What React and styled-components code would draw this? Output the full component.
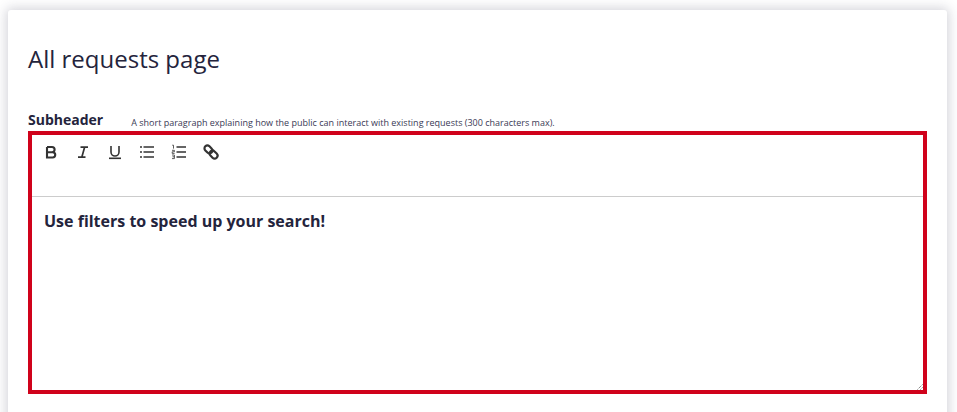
import React from "react";
import styled, { createGlobalStyle } from "styled-components";

const Global = createGlobalStyle`
  html, body { margin: 0; padding: 0; background: #fff; height: 412px; overflow: hidden; }
  body { font-family: "Open Sans", "Liberation Sans", sans-serif; color: #2a2a40; }
`;
const Page = styled.div`
  height: 412px;
  overflow: hidden;
  padding: 10px 10px 0 8px;
  box-sizing: border-box;
`;
const Card = styled.section`
  background: #fff;
  border-radius: 3px;
  box-shadow: 0 0 12px 2px rgba(40, 40, 70, 0.2);
  padding: 29px 20px 40px;
  height: 460px;
  box-sizing: border-box;
`;
const Title = styled.h1`
  margin: 0;
  font-size: 24px;
  line-height: 40px;
  font-weight: 400;
  color: #24243c;
`;
const LabelRow = styled.div`
  display: flex;
  align-items: flex-end;
  margin-top: 30px;
  height: 22px;
`;
const Label = styled.label`
  font-size: 14px;
  font-weight: 700;
  line-height: 22px;
  color: #24243c;
`;
const Hint = styled.span`
  font-size: 9px;
  line-height: 17px;
  margin-left: 28px;
  color: #3a3a55;
`;
const Editor = styled.div`
  border: 4px solid #d0021b;
  height: 263px;
  box-sizing: border-box;
  display: flex;
  flex-direction: column;
  position: relative;
`;
const Toolbar = styled.div`
  height: 62px;
  flex: none;
  border-bottom: 1px solid #ccc;
  display: flex;
  align-items: flex-start;
  padding: 5px 0 0 7px;
  gap: 8px;
  box-sizing: border-box;
`;
const ToolButton = styled.button`
  width: 24px;
  height: 24px;
  padding: 0;
  border: 0;
  background: none;
  display: flex;
  align-items: center;
  justify-content: center;
  color: #333;
`;
const Body = styled.div`
  padding: 12px;
  font-size: 16px;
  font-weight: 700;
  line-height: 24px;
  color: #24243c;
`;
const Grip = styled.svg`
  position: absolute;
  right: 0;
  bottom: 0;
`;
const Icon = ({ children }) => (
  <svg width="16" height="16" viewBox="0 0 16 16" fill="none" stroke="currentColor" strokeWidth="2">{children}</svg>
);

export default function App() {
  return (
    <Page>
      <Global />
      <Card>
        <Title>All requests page</Title>
        <LabelRow>
          <Label>Subheader</Label>
          <Hint>A short paragraph explaining how the public can interact with existing requests (300 characters max).</Hint>
        </LabelRow>
        <Editor>
          <Toolbar>
            <ToolButton aria-label="Bold"><Icon><path d="M4 3h5a2.6 2.6 0 0 1 0 5.2H4M4 8.2h5.6a2.6 2.6 0 0 1 0 5.3H4V3" strokeWidth="2.1" /></Icon></ToolButton>
            <ToolButton aria-label="Italic"><Icon><path d="M5.5 3.2h7.5M3 13.2h7.5M9.6 3.2l-2.8 10" strokeWidth="1.7" /></Icon></ToolButton>
            <ToolButton aria-label="Underline"><Icon><path d="M4 2v6a4 4 0 0 0 8 0V2" strokeWidth="1.6" /><path d="M2 14.3h12" strokeWidth="1.6" /></Icon></ToolButton>
            <ToolButton aria-label="Bulleted list"><Icon><path d="M4.5 3h10.5M4.5 8h10.5M4.5 13h10.5" strokeWidth="1.7" /><path d="M1 3h2M1 8h2M1 13h2" strokeWidth="1.7" /></Icon></ToolButton>
            <ToolButton aria-label="Numbered list"><Icon><path d="M5.5 3h9.5M5.5 8h9.5M5.5 13h9.5" strokeWidth="1.7" /><path d="M1.2 1.2h1.3v3.4M1 6.3h2.4v1.5H1.2v1.6h2.4M1 11h2.4v3.6H1M1.5 12.8h2" strokeWidth=".8" /></Icon></ToolButton>
            <ToolButton aria-label="Link"><Icon><g transform="rotate(45 8 8)"><rect x="0" y="5.1" width="8.8" height="5.8" rx="2.9" strokeWidth="2.2" /><rect x="7.2" y="5.1" width="8.8" height="5.8" rx="2.9" strokeWidth="2.2" /></g></Icon></ToolButton>
          </Toolbar>
          <Body>Use filters to speed up your search!</Body>
          <Grip width="6" height="6" viewBox="0 0 6 6"><path d="M5.5 .5 .5 5.5M5.5 3.5 3.5 5.5" stroke="#555" strokeWidth="1" strokeDasharray="1 1" /></Grip>
        </Editor>
      </Card>
    </Page>
  );
}
